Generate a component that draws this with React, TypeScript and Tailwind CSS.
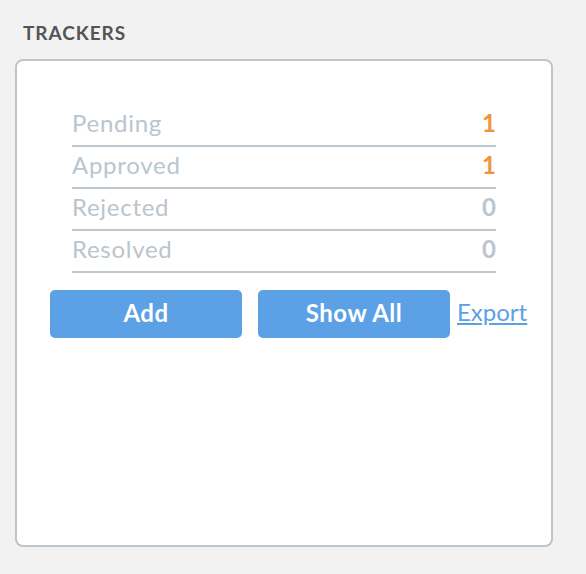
const rows = [
    {label: "Pending", count: 1},
    {label: "Approved", count: 1},
    {label: "Rejected", count: 0},
    {label: "Resolved", count: 0},
]

const App = () => {
    return (
        <div className="min-h-screen bg-[#f2f2f2] px-[15px] pt-[23px] font-['Lato',sans-serif]">
            <h2 className="pl-[8px] text-[19px] leading-[20px] font-bold tracking-[0.05em] text-[#545454]">
                TRACKERS
            </h2>
            <div className="mt-[16px] h-[488px] w-[538px] rounded-[8px] border-2 border-[#bcc6ce] bg-white">
                <div className="mx-auto w-[424px] pt-[44px]">
                    {rows.map((row) => (
                        <div key={row.label}
                             className="flex justify-between border-b-2 border-[#bcc6ce] pb-[4px] text-[24px] leading-[36px]">
                            <span className="tracking-[0.03em] text-[#bac5cd]">{row.label}</span>
                            <span className={row.count > 0 ? "font-bold text-[#f2923a]" : "font-bold text-[#bac5cd]"}>
                                {row.count}
                            </span>
                        </div>
                    ))}
                </div>
                <div className="mt-[17px] flex items-center pl-[33px]">
                    <button className="h-[48px] w-[192px] rounded-[5px] bg-[#5ca1e5] pb-[2px] text-[24px] font-bold tracking-[0.02em] text-white">
                        Add
                    </button>
                    <button className="ml-[16px] h-[48px] w-[192px] rounded-[5px] bg-[#5ca1e5] pb-[2px] text-[24px] font-bold tracking-[0.02em] text-white">
                        Show All
                    </button>
                    <a href="#" className="mb-[4px] ml-[7px] text-[24px] text-[#5ca1e5] underline">
                        Export
                    </a>
                </div>
            </div>
        </div>
    )
}

export default App
